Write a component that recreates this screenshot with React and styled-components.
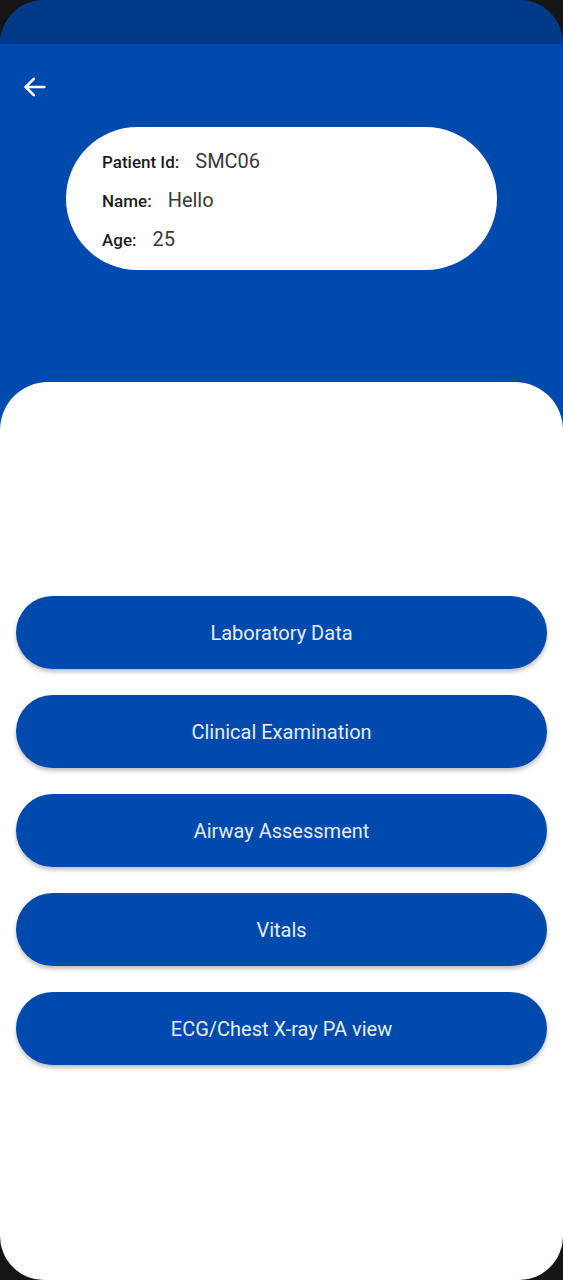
import React from 'react';
import styled, { createGlobalStyle } from 'styled-components';

const GlobalStyle = createGlobalStyle`
  html, body {
    margin: 0;
    padding: 0;
    background: #151515;
    font-family: Roboto, "Liberation Sans", sans-serif;
  }
`;

const Phone = styled.div`
  width: 563px;
  height: 1280px;
  border-radius: 44px;
  overflow: hidden;
  background: #004aad;
  display: flex;
  flex-direction: column;
`;

const StatusBar = styled.div`
  height: 44px;
  background: #003a89;
  flex-shrink: 0;
`;

const Header = styled.div`
  height: 338px;
  flex-shrink: 0;
  display: flex;
  flex-direction: column;
`;

const BackButton = styled.button`
  background: none;
  border: none;
  padding: 0;
  margin: 29px 0 0 21px;
  width: 28px;
  height: 28px;
  cursor: pointer;
  display: flex;
`;

const InfoCard = styled.div`
  margin: 26px 0 0 66px;
  width: 431px;
  height: 143px;
  box-sizing: border-box;
  background: #fff;
  border-radius: 72px;
  padding: 22px 0 0 36px;
  display: flex;
  flex-direction: column;
  gap: 16px;
`;

const InfoRow = styled.div`
  display: flex;
  align-items: baseline;
  gap: 16px;
  height: 23px;
`;

const Label = styled.span`
  font-size: 17px;
  font-weight: 500;
  color: #1c1c1c;
`;

const Value = styled.span`
  font-size: 20px;
  color: #383838;
`;

const Sheet = styled.div`
  flex: 1;
  background: #fff;
  border-radius: 48px 48px 0 0;
  padding: 214px 16px 0 16px;
  display: flex;
  flex-direction: column;
  gap: 26px;
`;

const MenuButton = styled.button`
  height: 73px;
  width: 100%;
  border: none;
  border-radius: 37px;
  background: #004aad;
  color: #e6edf8;
  font-family: Roboto, "Liberation Sans", sans-serif;
  font-size: 20px;
  font-weight: 400;
  box-shadow: 0 3px 4px rgba(0, 0, 0, 0.25);
  cursor: pointer;
`;

const items = [
  'Laboratory Data',
  'Clinical Examination',
  'Airway Assessment',
  'Vitals',
  'ECG/Chest X-ray PA view',
];

export default function App() {
  return (
    <>
      <GlobalStyle />
      <Phone>
        <StatusBar />
        <Header>
          <BackButton aria-label="back">
            <svg width="28" height="28" viewBox="0 0 24 24" fill="none" stroke="#fff" strokeWidth="2.2" strokeLinecap="round" strokeLinejoin="round">
              <path d="M20 12H4" />
              <path d="M11 5l-7 7 7 7" />
            </svg>
          </BackButton>
          <InfoCard>
            <InfoRow>
              <Label>Patient Id:</Label>
              <Value>SMC06</Value>
            </InfoRow>
            <InfoRow>
              <Label>Name:</Label>
              <Value>Hello</Value>
            </InfoRow>
            <InfoRow>
              <Label>Age:</Label>
              <Value>25</Value>
            </InfoRow>
          </InfoCard>
        </Header>
        <Sheet>
          {items.map((t) => (
            <MenuButton key={t}>{t}</MenuButton>
          ))}
        </Sheet>
      </Phone>
    </>
  );
}
